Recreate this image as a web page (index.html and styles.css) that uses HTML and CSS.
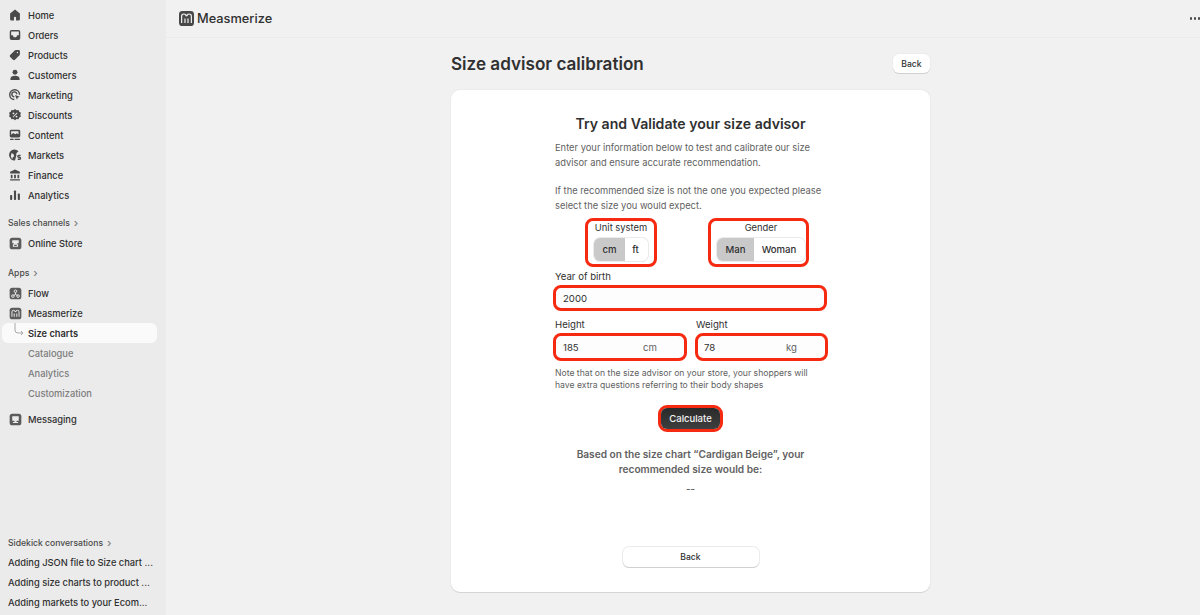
FILE: index.html
```html
<!DOCTYPE html>
<html>
<head>
  <title>Size advisor calibration</title>
  <link rel="stylesheet" href="styles.css">
</head>
<body>

<div class="sidebar">
  <div class="nav-item"><svg class="icon" viewBox="0 0 20 20"><path d="M10 2 3 8v8a2 2 0 0 0 2 2h3.500v-4a1.500 1.500 0 0 1 3 0v4H15a2 2 0 0 0 2-2V8z"/></svg>Home</div>
  <div class="nav-item"><svg class="icon" viewBox="0 0 20 20"><path fill-rule="evenodd" d="M5 3h10a2.500 2.500 0 0 1 2.500 2.500v9A2.500 2.500 0 0 1 15 17H5a2.500 2.500 0 0 1-2.500-2.500v-9A2.500 2.500 0 0 1 5 3zm-.5 2v5.500H7a3 3 0 0 0 6 0h2.500V5z"/></svg>Orders</div>
  <div class="nav-item"><svg class="icon" viewBox="0 0 20 20"><path fill-rule="evenodd" d="M11 3h4.500A1.500 1.500 0 0 1 17 4.500V9a2 2 0 0 1-.6 1.400l-6.500 6.500a2 2 0 0 1-2.800 0l-4-4a2 2 0 0 1 0-2.800l6.500-6.500A2 2 0 0 1 11 3zm2.500 2.500a1 1 0 1 0 0 2 1 1 0 0 0 0-2z"/></svg>Products</div>
  <div class="nav-item"><svg class="icon" viewBox="0 0 20 20"><circle cx="10" cy="6" r="3.500"/><path d="M3.500 17v-1.500C3.500 12.500 6 11 10 11s6.500 1.500 6.500 4.500V17z"/></svg>Customers</div>
  <div class="nav-item"><svg class="icon" viewBox="0 0 20 20"><path class="line" d="M9 16.500a7 7 0 1 1 7.500-7"/><path class="line" d="M9 12.500a3.500 3.500 0 1 1 3.500-3.500"/><path d="m10 10 7 2.500-3 1.200-1.200 3z"/></svg>Marketing</div>
  <div class="nav-item"><svg class="icon" viewBox="0 0 20 20"><path fill-rule="evenodd" d="m10 1.500 2.300 1.700 2.800-.3.900 2.600 2.500 1.400-.9 2.600.9 2.600-2.500 1.400-.9 2.600-2.800-.3-2.300 1.700-2.300-1.700-2.800.3-.9-2.600-2.500-1.400.9-2.600-.9-2.600L4 5.500l.9-2.600 2.800.3zM7.800 6.500a1.300 1.300 0 1 0 0 2.600 1.300 1.300 0 0 0 0-2.600zm4.400 4.400a1.300 1.300 0 1 0 0 2.600 1.300 1.300 0 0 0 0-2.600zm.6-4.300L6.600 12.800l.8.800 6.200-6.200z"/></svg>Discounts</div>
  <div class="nav-item"><svg class="icon" viewBox="0 0 20 20"><path fill-rule="evenodd" d="M4.500 2.500h11a2 2 0 0 1 2 2v7a2 2 0 0 1-2 2h-11a2 2 0 0 1-2-2v-7a2 2 0 0 1 2-2zM4.500 4.500v5l3-2.500 3 2 2-1.500 2.500 1.500v-4.500z"/><path d="M3 15.500h5V17H3zm6.500 0H17V17H9.500z"/></svg>Content</div>
  <div class="nav-item"><svg class="icon" viewBox="0 0 20 20"><path fill-rule="evenodd" d="M9 2a8 8 0 0 1 6 2.700L13 6.500c-1 1-1.500 2-1 4L10 18A8 8 0 0 1 9 2zM5 7l3 2 1 3-2 1-1 3-2-4z"/><path class="line" d="M18 10.500h-2.500a1.200 1.200 0 0 0 0 2.800h1a1.200 1.200 0 0 1 0 2.700H14"/></svg>Markets</div>
  <div class="nav-item"><svg class="icon" viewBox="0 0 20 20"><path d="M10 2 3 5.500V8h14V5.500z"/><path d="M4 9.500h2.500v5H4zm4.700 0h2.600v5H8.700zm4.800 0H16v5h-2.500zM3 16h14v2H3z"/></svg>Finance</div>
  <div class="nav-item"><svg class="icon" viewBox="0 0 20 20"><rect x="3" y="10" width="3" height="7" rx="1"/><rect x="8.500" y="3.500" width="3" height="13.500" rx="1"/><rect x="14" y="8" width="3" height="9" rx="1"/></svg>Analytics</div>

  <div class="nav-label first-label">Sales channels <span class="chev">&rsaquo;</span></div>
  <div class="nav-item"><svg class="icon box" viewBox="0 0 20 20"><rect x="1" y="1" width="18" height="18" rx="4"/><path class="inv" d="M5 5h10v4a1.800 1.800 0 0 1-2.500.5 2 2 0 0 1-5 0A1.800 1.800 0 0 1 5 9zm1 6h8v4H6zm2 1v2h4v-2z"/></svg>Online Store</div>

  <div class="nav-label apps-label">Apps <span class="chev">&rsaquo;</span></div>
  <div class="nav-item"><svg class="icon box" viewBox="0 0 20 20"><rect x="1" y="1" width="18" height="18" rx="4"/><circle class="ring" cx="10" cy="6.500" r="2"/><circle class="ring" cx="6" cy="14" r="2"/><circle class="ring" cx="14" cy="14" r="2"/><path class="ring" d="M10 8.500v3L7 13m3-1.500 3 1.500"/></svg>Flow</div>
  <div class="nav-item"><svg class="icon box" viewBox="0 0 20 20"><rect x="1" y="1" width="18" height="18" rx="4"/><path class="ring" d="M4.500 15V7.500a2.500 2.500 0 0 1 5 0 .5.500 0 0 1 1 0 2.500 2.500 0 0 1 5 0V15M8 15v-5M12 15v-5"/></svg>Measmerize</div>
  <div class="nav-item sub active">
    <svg class="tree" viewBox="0 0 12 20"><path d="M1 0v7a3 3 0 0 0 3 3h5m-2-2 2 2-2 2"/></svg>
    Size charts
  </div>
  <div class="nav-item sub muted">Catalogue</div>
  <div class="nav-item sub muted">Analytics</div>
  <div class="nav-item sub muted">Customization</div>
  <div class="nav-item messaging"><svg class="icon box" viewBox="0 0 20 20"><rect x="1" y="1" width="18" height="18" rx="4"/><path class="inv" d="M5 5h10v7h-3a2 2 0 0 1-4 0H5zm1 9h8v1.500H6z"/></svg>Messaging</div>

  <div class="sidekick">
    <div class="nav-label">Sidekick conversations <span class="chev">&rsaquo;</span></div>
    <div class="nav-item plain">Adding JSON file to Size chart ...</div>
    <div class="nav-item plain">Adding size charts to product ...</div>
    <div class="nav-item plain">Adding markets to your Ecom...</div>
  </div>
</div>

<div class="main">
  <div class="topbar">
    <svg class="logo" viewBox="0 0 20 20"><rect x="0" y="0" width="20" height="20" rx="4.500"/><path d="M3.500 16V7a3 3 0 0 1 6 0 .5.500 0 0 1 1 0 3 3 0 0 1 6 0v9M8 16v-6M12 16v-6"/></svg>
    <span class="app-name">Measmerize</span>
    <span class="dots"><i></i><i></i><i></i></span>
  </div>

  <div class="page">
    <div class="page-head">
      <h1>Size advisor calibration</h1>
      <button class="btn">Back</button>
    </div>

    <div class="card">
      <h2>Try and Validate your size advisor</h2>
      <p class="intro">Enter your information below to test and calibrate our size advisor and ensure accurate recommendation.</p>
      <p class="intro second">If the recommended size is not the one you expected please select the size you would expect.</p>

      <div class="toggles">
        <div class="mark toggle-box unit">
          <div class="toggle-label">Unit system</div>
          <div class="toggle">
            <span class="opt on cm">cm</span><span class="opt ft">ft</span>
          </div>
        </div>
        <div class="mark toggle-box gender">
          <div class="toggle-label">Gender</div>
          <div class="toggle">
            <span class="opt on man">Man</span><span class="opt woman">Woman</span>
          </div>
        </div>
      </div>

      <label class="field-label">Year of birth</label>
      <div class="mark field year">2000</div>

      <div class="two-col">
        <div class="col">
          <label class="field-label">Height</label>
          <div class="mark field height">185<span class="unit-text">cm</span></div>
        </div>
        <div class="col">
          <label class="field-label">Weight</label>
          <div class="mark field weight">78<span class="unit-text">kg</span></div>
        </div>
      </div>

      <p class="note">Note that on the size advisor on your store, your shoppers will have extra questions referring to their body shapes</p>

      <div class="mark calc-wrap"><button class="calc">Calculate</button></div>

      <p class="result">Based on the size chart “Cardigan Beige”, your recommended size would be:</p>
      <p class="dash">--</p>

      <button class="btn wide">Back</button>
    </div>
  </div>
</div>

</body>
</html>
```

FILE: styles.css
```css
html, body {
  height: 100%;
}

body {
  margin: 0;
  display: flex;
  height: 615px;
  overflow: hidden;
  font-family: Inter, "Liberation Sans", sans-serif;
  font-size: 9.6px;
  color: #303030;
  background: #f1f1f1;
}

/* sidebar */
.sidebar {
  width: 166px;
  flex-shrink: 0;
  box-sizing: border-box;
  padding: 5px 9px 3px 2px;
  background: #ebebeb;
  display: flex;
  flex-direction: column;
}

.nav-item {
  height: 20px;
  display: flex;
  align-items: center;
  padding-left: 26px;
  position: relative;
  font-size: 9.3px;
  font-weight: 500;
  white-space: nowrap;
}

.icon {
  position: absolute;
  left: 6px;
  top: 3px;
  width: 14px;
  height: 14px;
  fill: #4a4a4a;
}

.icon .line {
  fill: none;
  stroke: #4a4a4a;
  stroke-width: 2;
}

.icon.box {
  left: 7px;
  top: 3.500px;
  width: 13px;
  height: 13px;
  fill: #5c5c5c;
}

.icon .inv {
  fill: #ebebeb;
}

.icon .ring {
  fill: none;
  stroke: #ebebeb;
  stroke-width: 1.5;
}

.nav-label {
  height: 20px;
  display: flex;
  align-items: center;
  gap: 3px;
  padding-left: 6px;
  font-size: 8.6px;
  font-weight: 500;
  color: #4a4a4a;
}

.chev {
  font-size: 11px;
  margin-left: 1px;
  color: #7d7d7d;
}

.first-label {
  margin-top: 8px;
}

.apps-label {
  margin-top: 10px;
}

.sub.active {
  background: #fafafa;
  border-radius: 6px;
  font-weight: 600;
}

.tree {
  position: absolute;
  left: 12px;
  top: 0;
  width: 12px;
  height: 20px;
  fill: none;
  stroke: #a8a8a8;
  stroke-width: 1;
}

.muted {
  color: #7d7d7d;
  font-weight: 500;
}

.messaging {
  margin-top: 6px;
}

.sidekick {
  margin-top: auto;
}

.sidekick .nav-label {
  height: 18px;
}

.plain {
  padding-left: 6px;
}

/* main area */
.main {
  flex: 1;
  min-width: 0;
  display: flex;
  flex-direction: column;
}

.topbar {
  height: 37px;
  flex-shrink: 0;
  display: flex;
  align-items: center;
  padding-left: 13px;
  border-bottom: 1px solid #ebebeb;
}

.logo {
  width: 15px;
  height: 15px;
  fill: #484848;
}

.logo path {
  fill: none;
  stroke: #f1f1f1;
  stroke-width: 1.6;
}

.app-name {
  margin-left: 3px;
  font-size: 12.8px;
  font-weight: 500;
  color: #303030;
}

.dots {
  margin-left: auto;
  display: flex;
  gap: 1.500px;
  margin-right: 0;
}

.dots i {
  width: 2.500px;
  height: 2.500px;
  border-radius: 50%;
  background: #4a4a4a;
}

.page {
  width: 479px;
  margin-left: 285px;
}

.page-head {
  display: flex;
  justify-content: space-between;
  align-items: center;
  height: 19px;
  margin-top: 16px;
}

h1 {
  margin: 0;
  font-size: 17.1px;
  line-height: 19px;
  font-weight: 600;
  color: #303030;
}

.btn {
  width: 37px;
  height: 19px;
  padding: 0;
  border: none;
  border-radius: 6px;
  background: #fff;
  box-shadow: 0 1px 0 #d0d0d0, 0 0 0 1px #ececec;
  font-family: inherit;
  font-size: 8.6px;
  font-weight: 500;
  color: #303030;
}

.card {
  margin-top: 17px;
  height: 502px;
  box-sizing: border-box;
  padding: 25px 104px 0;
  background: #fff;
  border-radius: 9px;
  box-shadow: 0 1px 0 #d5d5d5, 0 0 0 1px #ebebeb;
  display: flex;
  flex-direction: column;
}

h2 {
  margin: 0;
  text-align: center;
  font-size: 14.1px;
  line-height: 17px;
  font-weight: 600;
  color: #303030;
}

.intro {
  margin: 8px 0 0;
  font-size: 9.35px;
  line-height: 15px;
  color: #616161;
}

.intro.second {
  margin-top: 13px;
}

.mark {
  border: 3px solid #f52a10;
  box-sizing: border-box;
}

.toggles {
  display: flex;
  margin-top: 5px;
  padding-left: 30px;
}

.toggle-box {
  height: 49px;
  border-radius: 8px;
  display: flex;
  flex-direction: column;
  align-items: center;
}

.unit {
  width: 72px;
}

.gender {
  width: 101px;
  margin-left: 51px;
  padding-left: 5px;
}

.toggle-label {
  height: 17px;
  line-height: 13px;
  font-size: 9.4px;
  color: #303030;
}

.toggle {
  display: flex;
  height: 23px;
  border-radius: 6px;
  overflow: hidden;
  background: #fff;
  box-shadow: 0 0 0 1px #ebebeb, 0 1px 0 #d0d0d0;
}

.opt {
  display: flex;
  align-items: center;
  justify-content: center;
  font-weight: 500;
}

.opt.on {
  background: #c9c9c9;
}

.cm { width: 31px; }
.ft { width: 23px; padding-right: 2px; box-sizing: border-box; }
.man { width: 37px; }
.woman { width: 51px; padding-right: 1px; box-sizing: border-box; }

.field-label {
  display: block;
  height: 13px;
  line-height: 13px;
  color: #303030;
}

.toggles + .field-label {
  margin-top: 3px;
}

.field {
  margin-top: 2px;
  margin-left: -2px;
  padding-left: 7px;
  border-radius: 8px;
  display: flex;
  align-items: center;
  background: #fdfdfd;
  color: #303030;
}

.year {
  height: 26px;
  width: 274px;
}

.two-col {
  display: flex;
  gap: 9px;
  margin-top: 7px;
}

.col {
  flex: 1;
}

.height {
  height: 28px;
  width: 134px;
}

.weight {
  height: 28px;
  width: 133px;
  margin-left: -1px;
  padding-left: 6px;
}

.unit-text {
  margin-left: auto;
  margin-right: 27px;
  color: #616161;
}

.weight .unit-text {
  margin-right: 28px;
}

.note {
  margin: 6px 0 0;
  font-size: 8.65px;
  line-height: 12px;
  color: #616161;
}

.calc-wrap {
  align-self: center;
  margin-top: 14px;
  width: 65px;
  height: 27px;
  border-radius: 9px;
}

.calc {
  display: block;
  width: 59px;
  height: 21px;
  padding: 0;
  border: none;
  border-radius: 6px;
  background: linear-gradient(#2a2a2a, #3f3f3f);
  font-family: inherit;
  font-size: 9.5px;
  font-weight: 500;
  color: #f4f4f4;
}

.result {
  margin: 15px auto 0;
  width: 240px;
  text-align: center;
  font-size: 10.15px;
  line-height: 14.5px;
  font-weight: 600;
  color: #616161;
}

.dash {
  margin: 5px 0 0;
  text-align: center;
  line-height: 15px;
  font-weight: 600;
  color: #616161;
}

.btn.wide {
  align-self: center;
  width: 136px;
  height: 20px;
  margin-top: 51px;
}
```
